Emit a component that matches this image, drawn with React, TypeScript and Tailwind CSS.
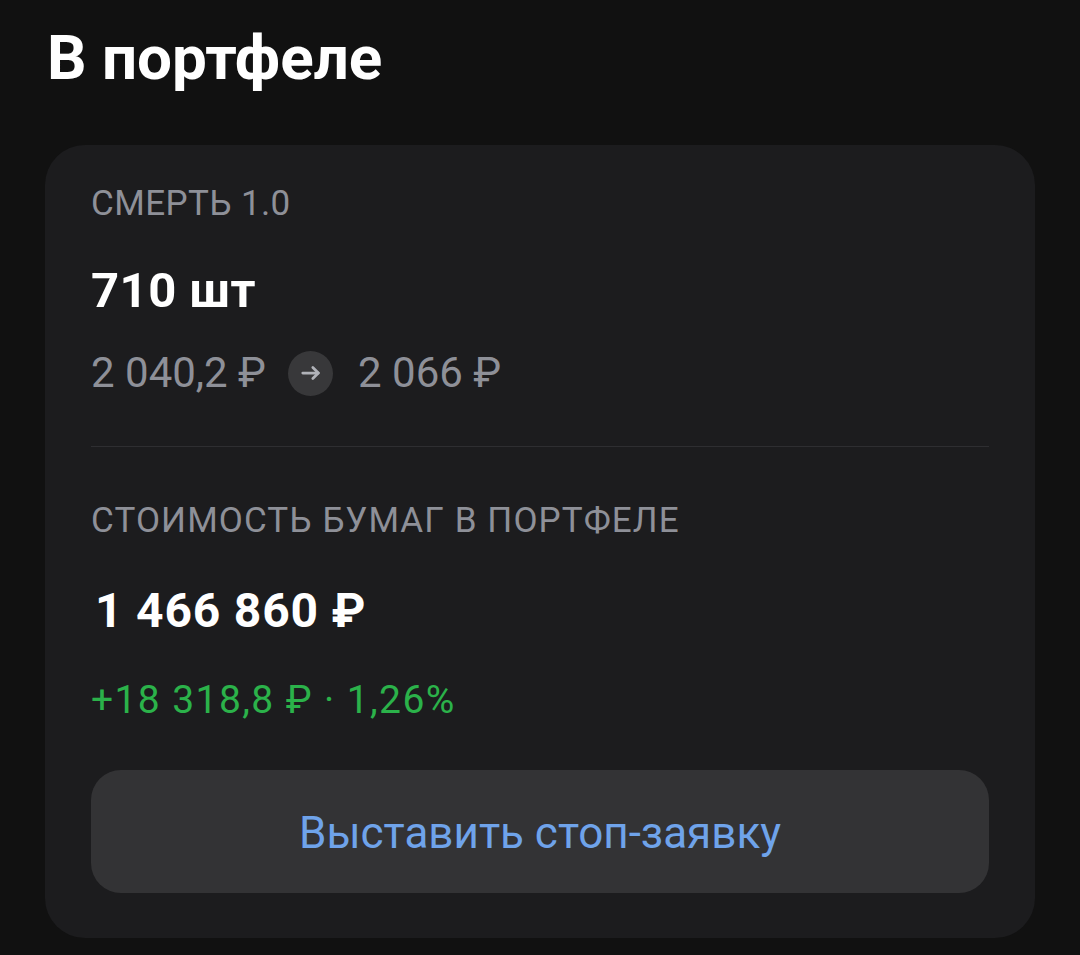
export default function App() {
  return (
    <div className="min-h-[955px] w-[1080px] bg-[#111111] px-[45px] pt-[18px] font-['Roboto',sans-serif]">
      <h1 className="pl-[2px] text-[62px] leading-[80px] font-bold text-white">В портфеле</h1>

      <div className="mt-[47px] rounded-[40px] bg-[#1c1c1e] px-[46px] pt-[39px] pb-[45px]">
        <div className="text-[35px] leading-[40px] tracking-[0.4px] text-[#8e9098]">СМЕРТЬ 1.0</div>
        <div className="mt-[42px] text-[49px] leading-[50px] font-bold tracking-[0.5px] text-white">710 шт</div>
        <div className="mt-[32px] flex items-center text-[42px] leading-[50px] text-[#8e9098]">
          <span>2 040,2 ₽</span>
          <span className="mr-[25px] ml-[22px] flex h-[45px] w-[45px] items-center justify-center rounded-full bg-[#38383a]">
            <svg width="22" height="22" viewBox="0 0 24 24" fill="none" stroke="#b0b2b8" strokeWidth="3" strokeLinecap="round" strokeLinejoin="round">
              <path d="M3 12h17" />
              <path d="M14 6l6 6-6 6" />
            </svg>
          </span>
          <span>2 066 ₽</span>
        </div>

        <div className="mt-[48px] h-px bg-[#2e2e31]" />

        <div className="mt-[54px] text-[35px] leading-[40px] tracking-[1.1px] text-[#8e9098]">СТОИМОСТЬ БУМАГ В ПОРТФЕЛЕ</div>
        <div className="mt-[45px] pl-[4px] text-[48px] leading-[50px] font-bold tracking-[0.8px] text-white">1 466 860 ₽</div>
        <div className="mt-[39px] text-[39px] leading-[50px] tracking-[1.4px] text-[#2bb24a]">+18 318,8 ₽ · 1,26%</div>

        <button className="mt-[45px] flex h-[123px] w-full items-center justify-center rounded-[30px] bg-[#333335] pt-[2px] text-[44px] text-[#6fa3ea]">
          Выставить стоп-заявку
        </button>
      </div>
    </div>
  );
}
